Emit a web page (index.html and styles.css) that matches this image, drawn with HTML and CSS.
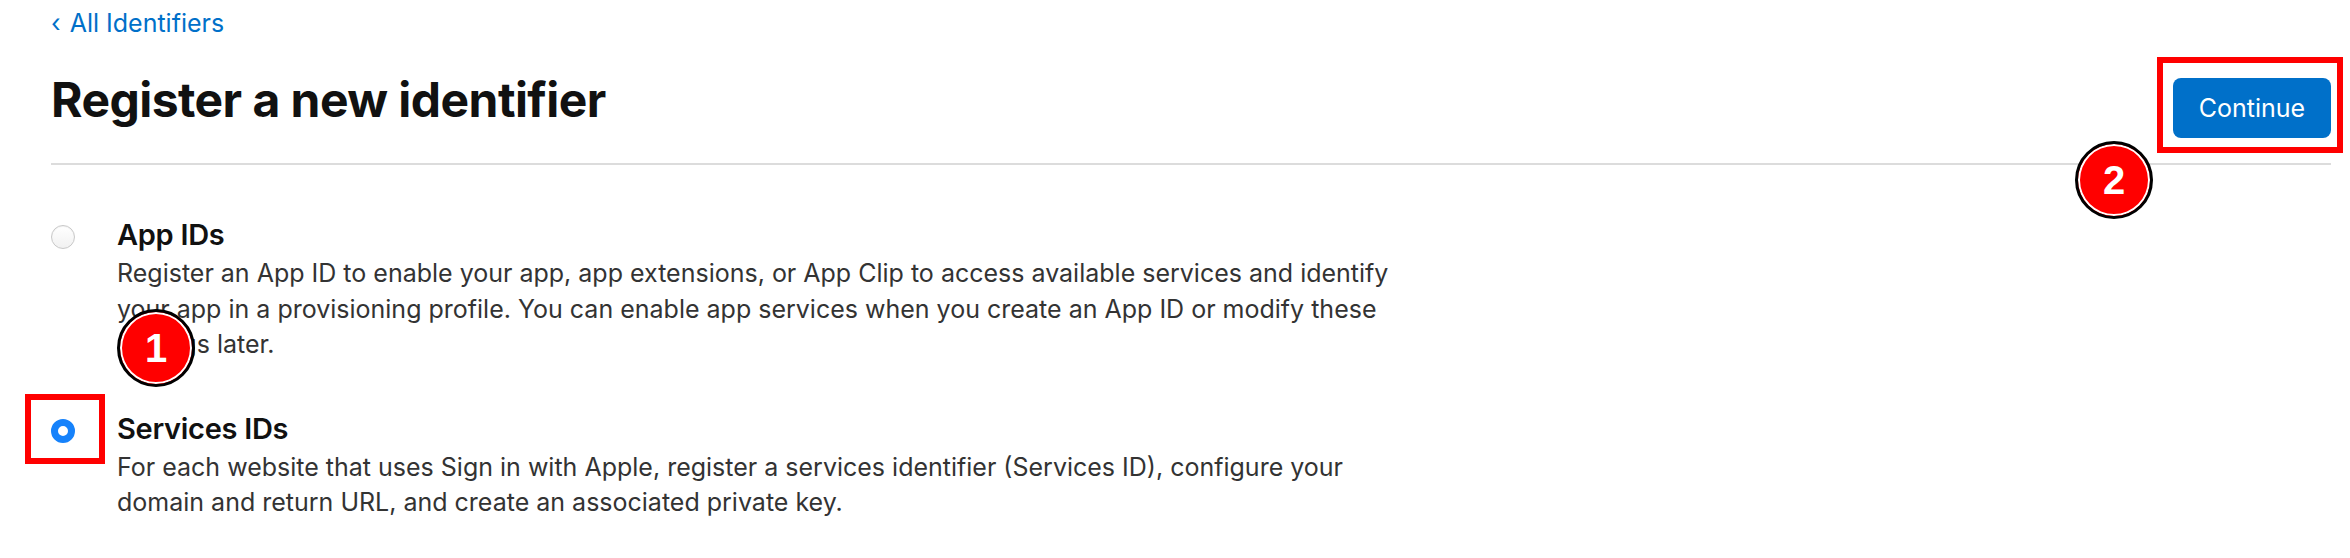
FILE: index.html
```html
<!DOCTYPE html>
<html lang="en">
<head>
<meta charset="utf-8">
<title>Register a new identifier</title>
<link rel="stylesheet" href="styles.css">
</head>
<body>
<main class="page">
  <header class="page-header">
    <a class="back-link" href="#"><span class="chev">‹</span> All Identifiers</a>
    <div class="title-row">
      <h1 class="title">Register a new identifier</h1>
      <div class="action">
        <button class="btn-primary" type="button">Continue</button>
        <span class="mark-box mark-box-btn"></span>
        <span class="step step-2">2</span>
      </div>
    </div>
  </header>

  <ul class="options">
    <li class="option">
      <span class="radio-wrap"><span class="radio"></span></span>
      <div class="option-body">
        <h2 class="option-title">App IDs</h2>
        <p class="option-desc">Register an App ID to enable your app, app extensions, or App Clip to access available services and identify your app in a provisioning profile. You can enable app services when you create an App ID or modify these settings later.</p>
      </div>
      <span class="step step-1">1</span>
    </li>
    <li class="option">
      <span class="radio-wrap">
        <span class="radio radio-checked"></span>
        <span class="mark-box mark-box-radio"></span>
      </span>
      <div class="option-body">
        <h2 class="option-title">Services IDs</h2>
        <p class="option-desc">For each website that uses Sign in with Apple, register a services identifier (Services ID), configure your domain and return URL, and create an associated private key.</p>
      </div>
    </li>
  </ul>
</main>
</body>
</html>
```

FILE: styles.css
```css
* { box-sizing: border-box; }

html, body {
  margin: 0;
  padding: 0;
  background: #fff;
}

body {
  font-family: "Inter", "Liberation Sans", sans-serif;
  color: #1d1d1f;
}

.page {
  padding: 6px 19px 0 51px;
}

.page-header {
  border-bottom: 2px solid #dcdcdc;
  padding-bottom: 25px;
}

.back-link {
  display: inline-block;
  font-size: 25px;
  line-height: 35px;
  color: #0070c9;
  text-decoration: none;
}

.chev {
  display: inline-block;
  margin-right: 2px;
}

.title-row {
  display: flex;
  justify-content: space-between;
  align-items: flex-start;
  margin-top: 32px;
}

.title {
  margin: 0;
  font-size: 48px;
  line-height: 53px;
  font-weight: 700;
  letter-spacing: -0.55px;
  color: #111;
}

.action {
  position: relative;
  margin-top: 5px;
}

.btn-primary {
  display: block;
  width: 158px;
  height: 60px;
  border: 0;
  border-radius: 8px;
  background: #0070c9;
  color: #fff;
  font-family: "Inter", "Liberation Sans", sans-serif;
  font-size: 25px;
  padding: 0;
}

.mark-box {
  position: absolute;
  border: 6px solid #ff0000;
  pointer-events: none;
}

.mark-box-btn {
  left: -16px;
  right: -12px;
  top: -21px;
  bottom: -15px;
}

.step {
  position: absolute;
  width: 78px;
  height: 78px;
  border-radius: 50%;
  border: 3px solid #000;
  background: #ff0000;
  box-shadow: inset 0 0 0 2px #fff;
  color: #fff;
  font-family: "Liberation Sans", "Inter", sans-serif;
  font-weight: 700;
  font-size: 40px;
  display: flex;
  align-items: center;
  justify-content: center;
  line-height: 1;
}

.step-2 {
  left: -98px;
  top: 63px;
}

.options {
  list-style: none;
  margin: 0;
  padding: 52px 0 0 0;
}

.option {
  position: relative;
  display: grid;
  grid-template-columns: 24px 1fr;
  column-gap: 42px;
  margin-bottom: 48px;
}

.radio-wrap {
  position: relative;
  width: 24px;
  height: 24px;
  margin-top: 8px;
}

.radio {
  display: block;
  width: 24px;
  height: 24px;
  border-radius: 50%;
  border: 1px solid #c8c8c8;
  background: linear-gradient(#ffffff, #f1f1f1);
  box-shadow: inset 0 1px 1px rgba(0,0,0,0.05);
}

.radio-checked {
  border: 7px solid #1682fb;
  background: #fff;
  box-shadow: none;
}

.mark-box-radio {
  left: -26px;
  right: -30px;
  top: -25px;
  bottom: -21px;
}

.option-body {
  min-width: 0;
}

.option-title {
  margin: 0;
  font-size: 29px;
  line-height: 36px;
  font-weight: 600;
  letter-spacing: -0.3px;
  color: #111;
}

.option-desc {
  margin: 3px 0 0 0;
  max-width: 1305px;
  font-size: 25px;
  line-height: 35.5px;
  color: #333;
}

.step-1 {
  left: 66px;
  top: 92px;
}
```
